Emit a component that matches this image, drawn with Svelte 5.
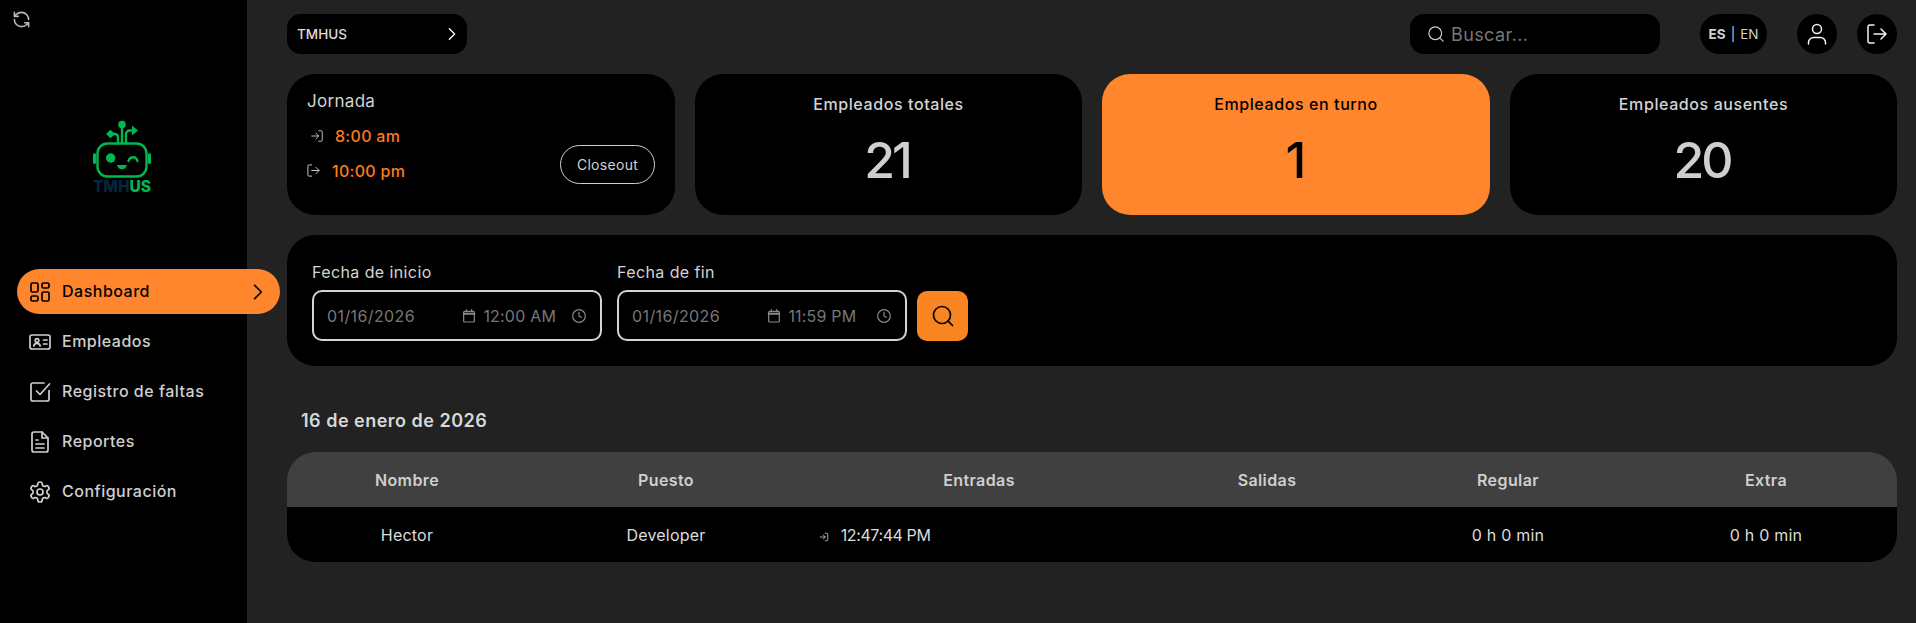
<script>
  const nav = [
    { label: 'Dashboard', icon: 'dash', active: true },
    { label: 'Empleados', icon: 'card' },
    { label: 'Registro de faltas', icon: 'check' },
    { label: 'Reportes', icon: 'file' },
    { label: 'Configuración', icon: 'gear' }
  ]

  const stats = [
    { title: 'Empleados totales', value: 21 },
    { title: 'Empleados en turno', value: 1, active: true },
    { title: 'Empleados ausentes', value: 20 }
  ]

  const filters = [
    { label: 'Fecha de inicio', date: '01/16/2026', time: '12:00 AM' },
    { label: 'Fecha de fin', date: '01/16/2026', time: '11:59 PM' }
  ]

  const columns = ['Nombre', 'Puesto', 'Entradas', 'Salidas', 'Regular', 'Extra']
</script>

{#snippet icon(name)}
  {#if name === 'dash'}
    <rect x="3" y="3" width="7" height="9" rx="1.5" /><rect x="14" y="3" width="7" height="5" rx="1.5" /><rect x="14" y="12" width="7" height="9" rx="1.5" /><rect x="3" y="16" width="7" height="5" rx="1.5" />
  {:else if name === 'card'}
    <rect x="2" y="5" width="20" height="14" rx="2" /><circle cx="9" cy="10.5" r="1.8" /><path d="M5.8 16c.4-1.8 1.6-2.6 3.2-2.6s2.8.8 3.2 2.6M15.5 10h3.5M15.5 14h3.5" />
  {:else if name === 'check'}
    <path d="M21 10.5V19a2 2 0 0 1-2 2H5a2 2 0 0 1-2-2V5a2 2 0 0 1 2-2h11" /><path d="m8.5 11 3.5 3.5L21.500 4" />
  {:else if name === 'file'}
    <path d="M14 2H6a2 2 0 0 0-2 2v16a2 2 0 0 0 2 2h12a2 2 0 0 0 2-2V8z" /><path d="M14 2v6h6M8 10h2M8 14h8M8 18h8" />
  {:else if name === 'gear'}
    <path d="M12.22 2h-.44a2 2 0 0 0-2 2v.18a2 2 0 0 1-1 1.73l-.43.25a2 2 0 0 1-2 0l-.15-.08a2 2 0 0 0-2.73.73l-.22.38a2 2 0 0 0 .73 2.73l.15.1a2 2 0 0 1 1 1.72v.51a2 2 0 0 1-1 1.74l-.15.09a2 2 0 0 0-.73 2.73l.22.38a2 2 0 0 0 2.73.73l.15-.08a2 2 0 0 1 2 0l.43.25a2 2 0 0 1 1 1.73V20a2 2 0 0 0 2 2h.44a2 2 0 0 0 2-2v-.18a2 2 0 0 1 1-1.73l.43-.25a2 2 0 0 1 2 0l.15.08a2 2 0 0 0 2.73-.73l.22-.39a2 2 0 0 0-.73-2.73l-.15-.08a2 2 0 0 1-1-1.74v-.5a2 2 0 0 1 1-1.74l.15-.09a2 2 0 0 0 .73-2.73l-.22-.38a2 2 0 0 0-2.73-.73l-.15.08a2 2 0 0 1-2 0l-.43-.25a2 2 0 0 1-1-1.73V4a2 2 0 0 0-2-2z" /><circle cx="12" cy="12" r="3" />
  {:else if name === 'chevron'}
    <path d="m8 4 8 8-8 8" />
  {:else if name === 'search'}
    <circle cx="11" cy="11" r="8.5" /><path d="m21.5 21.5-4.4-4.4" />
  {:else if name === 'login'}
    <path d="M15 3h4a2 2 0 0 1 2 2v14a2 2 0 0 1-2 2h-4M3 12h12M10 7l5 5-5 5" />
  {:else if name === 'logout'}
    <path d="M9 21H5a2 2 0 0 1-2-2V5a2 2 0 0 1 2-2h4M9 12h12M16 7l5 5-5 5" />
  {:else if name === 'user'}
    <circle cx="12" cy="7" r="4.5" /><path d="M3.5 22v-1.5a5 5 0 0 1 5-5h7a5 5 0 0 1 5 5V22" />
  {:else if name === 'calendar'}
    <rect x="4" y="5" width="16" height="16" rx="1.5" /><path d="M4 8.5h16" stroke-width="3" /><path d="M8 2.5v3M16 2.5v3" />
  {:else if name === 'clock'}
    <circle cx="12" cy="12" r="9.5" /><path d="M12 6.5V12l3.5 2" />
  {:else if name === 'refresh'}
    <path d="M21 12a9 9 0 0 0-9-9 9.75 9.75 0 0 0-6.74 2.74L3 8M3 3v5h5M3 12a9 9 0 0 0 9 9 9.75 9.75 0 0 0 6.74-2.74L21 16M16 16h5v5" />
  {/if}
{/snippet}

<div class="layout">
  <aside class="sidebar">
    <svg class="ic reload" viewBox="0 0 24 24">{@render icon('refresh')}</svg>

    <div class="logo">
      <svg width="60" height="60" viewBox="0 0 60 60" fill="none" stroke="#00b84f" stroke-width="2.4">
        <rect x="5.5" y="23.5" width="49" height="33" rx="10" />
        <path d="M2.500 34.500v8M57.500 34.500v8" stroke-width="3" stroke-linecap="round" />
        <path d="M30 23V6M26 23v-6a3 3 0 0 0-3-3h-4M34 23v-9a3.500 3.500 0 0 1 3.500-3.500H42" />
        <circle cx="30" cy="4.500" r="3.800" fill="#00b84f" stroke="none" />
        <path d="M14 14l4.500-4.200L23 14l-4.500 4.200zM40 5.500l6 5-6 5z" fill="#00b84f" stroke="none" />
        <circle cx="18.700" cy="38" r="4.700" fill="#00b84f" stroke="none" />
        <path d="M36.500 41c1.200-5 7.800-5 9 0" stroke-linecap="round" />
        <path d="M25 45h10c-.5 2.800-2.500 4.200-5 4.200s-4.500-1.400-5-4.200z" fill="#00b84f" stroke="none" />
      </svg>
      <div class="logo-text"><span class="navy">TMH</span><span class="green">US</span></div>
    </div>

    <nav class="nav">
      {#each nav as item}
        <div class="nav-item" class:active={item.active}>
          <svg class="ic nav-ic" viewBox="0 0 24 24">{@render icon(item.icon)}</svg>
          <span>{item.label}</span>
          {#if item.active}
            <svg class="ic nav-arrow" viewBox="0 0 24 24">{@render icon('chevron')}</svg>
          {/if}
        </div>
      {/each}
    </nav>
  </aside>

  <main class="main">
    <header class="topbar">
      <div class="company">
        <span>TMHUS</span>
        <svg class="ic company-arrow" viewBox="0 0 24 24">{@render icon('chevron')}</svg>
      </div>
      <div class="search">
        <svg class="ic search-ic" viewBox="0 0 24 24">{@render icon('search')}</svg>
        <span>Buscar...</span>
      </div>
      <div class="lang"><b>ES</b><i>|</i><span>EN</span></div>
      <div class="round user"><svg class="ic" viewBox="0 0 24 24">{@render icon('user')}</svg></div>
      <div class="round"><svg class="ic" viewBox="0 0 24 24">{@render icon('logout')}</svg></div>
    </header>

    <section class="cards">
      <div class="card shift">
        <div class="shift-title">Jornada</div>
        <div class="shift-row in">
          <svg class="ic" viewBox="0 0 24 24">{@render icon('login')}</svg>
          <span>8:00 am</span>
        </div>
        <div class="shift-row out">
          <svg class="ic" viewBox="0 0 24 24">{@render icon('logout')}</svg>
          <span>10:00 pm</span>
        </div>
        <button class="closeout">Closeout</button>
      </div>
      {#each stats as stat}
        <div class="card stat" class:active={stat.active}>
          <div class="stat-title">{stat.title}</div>
          <div class="stat-value">{stat.value}</div>
        </div>
      {/each}
    </section>

    <section class="filters">
      {#each filters as f}
        <div class="field">
          <span class="field-label">{f.label}</span>
          <div class="input">
            <span class="date">{f.date}</span>
            <svg class="ic input-ic" viewBox="0 0 24 24">{@render icon('calendar')}</svg>
            <span class="time">{f.time}</span>
            <svg class="ic input-ic" viewBox="0 0 24 24">{@render icon('clock')}</svg>
          </div>
        </div>
      {/each}
      <button class="go"><svg class="ic" viewBox="0 0 24 24">{@render icon('search')}</svg></button>
    </section>

    <h2 class="day">16 de enero de 2026</h2>

    <table class="table">
      <colgroup>
        <col style="width:240px" /><col style="width:278px" /><col style="width:348px" /><col style="width:228px" /><col style="width:254px" /><col style="width:262px" />
      </colgroup>
      <thead>
        <tr>
          {#each columns as c}<th>{c}</th>{/each}
        </tr>
      </thead>
      <tbody>
        <tr>
          <td>Hector</td>
          <td>Developer</td>
          <td class="entry">
            <svg class="ic" viewBox="0 0 24 24">{@render icon('login')}</svg>
            <span>12:47:44 PM</span>
          </td>
          <td></td>
          <td>0 h 0 min</td>
          <td>0 h 0 min</td>
        </tr>
      </tbody>
    </table>
  </main>
</div>

<style>
  :global(body) {
    margin: 0;
    background: #222222;
    font-family: Inter, 'Open Sans', sans-serif;
    color: #d4d4d4;
  }

  .layout {
    display: flex;
    height: 623px;
    overflow: hidden;
  }

  .ic {
    fill: none;
    stroke: currentColor;
    stroke-width: 2;
    stroke-linecap: round;
    stroke-linejoin: round;
    flex: none;
  }

  .sidebar {
    width: 247px;
    flex: none;
    background: #000;
    padding: 10px 0 0 17px;
    box-sizing: border-box;
    position: relative;
    z-index: 1;
  }

  .reload {
    display: block;
    width: 19px;
    height: 19px;
    margin-left: -5px;
    color: #b9b9b9;
  }

  .logo {
    margin: 91px 0 0 75px;
    width: 60px;
    height: 76px;
  }

  .logo svg {
    display: block;
  }

  .logo-text {
    margin-top: 0;
    font-size: 15.500px;
    line-height: 14px;
    font-weight: 800;
    text-align: center;
    white-space: nowrap;
  }

  .navy {
    color: #04263f;
  }

  .green {
    color: #00b84f;
  }

  .nav {
    margin-top: 73px;
    display: flex;
    flex-direction: column;
    gap: 5px;
    width: 263px;
  }

  .nav-item {
    display: flex;
    align-items: center;
    height: 45px;
    padding: 0 11px;
    border-radius: 23px;
    font-size: 16px;
    font-weight: 500;
    letter-spacing: 0.5px;
    color: #cfcfcf;
  }

  .nav-item span {
    margin-top: -2px;
  }

  .nav-item.active {
    background: #ff862d;
    color: #000;
  }

  .nav-ic {
    width: 24px;
    height: 24px;
    margin-right: 10px;
    stroke-width: 1.7;
  }

  .nav-arrow {
    width: 20px;
    height: 20px;
    margin-left: auto;
    margin-right: 1px;
  }

  .main {
    flex: 1;
    min-width: 0;
    padding: 14px 19px 0 40px;
  }

  .topbar {
    display: flex;
    align-items: center;
    height: 40px;
  }

  .company {
    width: 180px;
    height: 40px;
    box-sizing: border-box;
    padding: 0 7px 0 10px;
    background: #000;
    border-radius: 14px;
    display: flex;
    align-items: center;
    justify-content: space-between;
    font-size: 13.500px;
    font-weight: 500;
    color: #dcdcdc;
  }

  .company-arrow {
    width: 16px;
    height: 16px;
    color: #fff;
  }

  .search {
    width: 250px;
    height: 40px;
    margin-left: auto;
    box-sizing: border-box;
    padding: 0 17px;
    background: #000;
    border-radius: 14px;
    display: flex;
    align-items: center;
    gap: 6px;
    font-size: 18px;
    letter-spacing: 0.4px;
    color: #777;
  }

  .search-ic {
    width: 18px;
    height: 18px;
    color: #cfcfcf;
    stroke-width: 1.5;
  }

  .lang {
    width: 67px;
    height: 40px;
    margin-left: 40px;
    background: #000;
    border-radius: 20px;
    display: flex;
    align-items: center;
    justify-content: center;
    gap: 5px;
    font-size: 13.500px;
    color: #d0d0d0;
  }

  .lang i {
    font-style: normal;
  }

  .round {
    width: 40px;
    height: 40px;
    margin-left: 20px;
    background: #000;
    border-radius: 50%;
    display: flex;
    align-items: center;
    justify-content: center;
    color: #f2f2f2;
  }

  .round.user {
    margin-left: 30px;
  }

  .round svg {
    width: 24px;
    height: 24px;
    stroke-width: 1.5;
  }

  .cards {
    display: grid;
    grid-template-columns: 388px 387px 388px 387px;
    gap: 20px;
    margin-top: 20px;
  }

  .card {
    height: 141px;
    background: #000;
    border-radius: 28px;
  }

  .shift {
    position: relative;
    box-sizing: border-box;
    padding: 16px 20px;
  }

  .shift-title {
    font-size: 17px;
    line-height: 22px;
    letter-spacing: 0.3px;
  }

  .shift-row {
    display: flex;
    align-items: center;
    gap: 11px;
    height: 35px;
    font-size: 16px;
    font-weight: 500;
    letter-spacing: 0.3px;
    color: #ff7a1f;
  }

  .shift-row.in {
    margin-top: 6px;
    padding-left: 3px;
  }

  .shift-row svg {
    width: 14px;
    height: 14px;
    color: #c4c4c4;
    stroke-width: 1.6;
  }

  .shift-row.out svg {
    width: 15px;
    height: 15px;
    margin-left: -1px;
  }

  .closeout {
    position: absolute;
    right: 20px;
    bottom: 31px;
    width: 95px;
    height: 39px;
    border: 1px solid #d0d0d0;
    border-radius: 20px;
    background: none;
    color: #d0d0d0;
    font: inherit;
    font-size: 14px;
    letter-spacing: 0.3px;
  }

  .stat {
    text-align: center;
    padding-top: 18px;
    box-sizing: border-box;
  }

  .stat.active {
    background: #ff862d;
    color: #000;
  }

  .stat-title {
    font-size: 16px;
    font-weight: 500;
    line-height: 24px;
    letter-spacing: 0.6px;
  }

  .stat-value {
    margin-top: 9px;
    padding-right: 3px;
    font-size: 50px;
    font-weight: 500;
    line-height: 70px;
    letter-spacing: -3px;
  }

  .stat:not(.active) .stat-value {
    color: #cfcfcf;
  }

  .filters {
    margin-top: 20px;
    height: 131px;
    background: #000;
    border-radius: 28px;
    box-sizing: border-box;
    padding: 25px 0 25px 25px;
    display: flex;
    align-items: flex-end;
  }

  .field {
    display: flex;
    flex-direction: column;
    margin-right: 15px;
  }

  .field-label {
    font-size: 16px;
    line-height: 24px;
    margin-bottom: 6px;
    letter-spacing: 0.4px;
  }

  .input {
    width: 290px;
    height: 51px;
    box-sizing: border-box;
    border: 2px solid #d4d4d4;
    border-radius: 10px;
    padding: 0 13px;
    display: flex;
    align-items: center;
    font-size: 16px;
    letter-spacing: 0.4px;
    color: #777;
  }

  .date {
    width: 135px;
  }

  .time {
    width: 88px;
    margin-left: 6px;
    white-space: nowrap;
    letter-spacing: 0.2px;
  }

  .input-ic {
    width: 16px;
    height: 16px;
    stroke-width: 1.8;
    color: #8a8a8a;
  }

  .go {
    width: 51px;
    height: 50px;
    margin-left: -5px;
    border: 0;
    border-radius: 10px;
    background: #f98522;
    color: #000;
    display: flex;
    align-items: center;
    justify-content: center;
    padding: 0;
  }

  .go svg {
    width: 24px;
    height: 24px;
    stroke-width: 1.7;
  }

  .day {
    margin: 41px 0 18px 14px;
    font-size: 18px;
    line-height: 27px;
    font-weight: 600;
    letter-spacing: 0.5px;
    color: #d8d8d8;
  }

  .table {
    width: 1610px;
    table-layout: fixed;
    border-collapse: separate;
    border-spacing: 0;
    border-radius: 28px;
    overflow: hidden;
    background: #000;
  }

  th {
    height: 55px;
    padding: 0;
    background: #404040;
    font-size: 16px;
    font-weight: 600;
    letter-spacing: 0.4px;
    color: #cfcfcf;
  }

  td {
    height: 55px;
    padding: 0;
    text-align: center;
    font-size: 16px;
    letter-spacing: 0.2px;
    color: #dcdcdc;
  }

  td.entry {
    text-align: left;
    padding-left: 14px;
  }

  td.entry span {
    letter-spacing: -0.4px;
  }

  td.entry svg {
    width: 10px;
    height: 10px;
    margin-right: 7px;
    vertical-align: -1px;
    stroke-width: 2;
    color: #c4c4c4;
  }
</style>
